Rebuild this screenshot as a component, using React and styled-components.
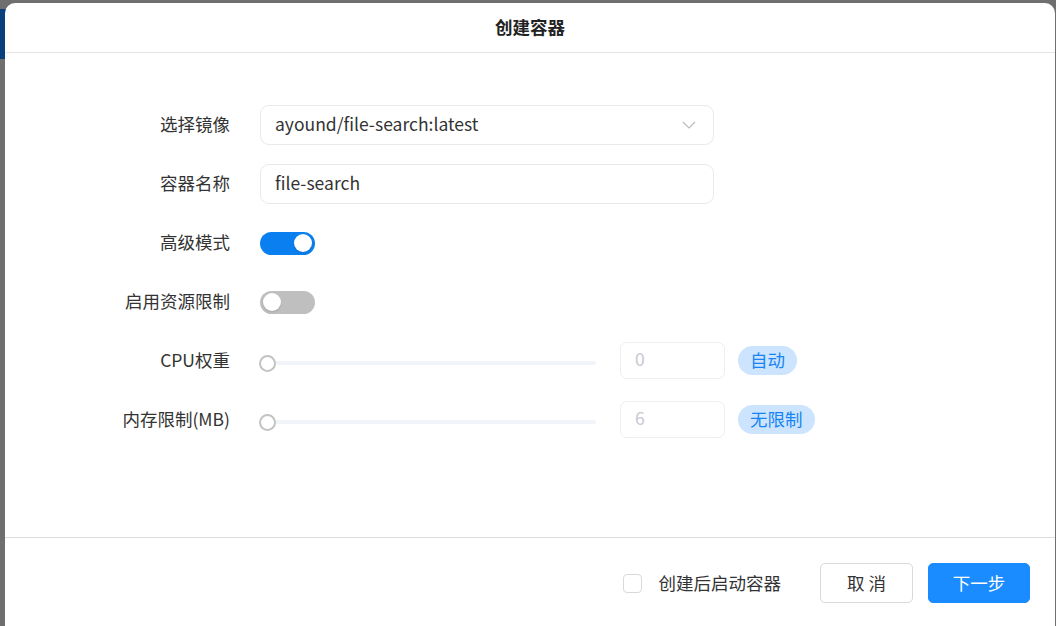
import React from "react";
import styled, { createGlobalStyle } from "styled-components";

const Global = createGlobalStyle`
  html, body { margin: 0; padding: 0; }
  body {
    width: 1056px; height: 626px; overflow: hidden;
    background: #6f6f6f;
    font-family: "Noto Sans CJK SC", "Noto Sans", sans-serif;
    color: #333;
  }
  * { box-sizing: border-box; }
`;

const Backdrop = styled.div`
  position: relative;
  width: 1056px;
  height: 626px;
  overflow: hidden;
  background: #6f6f6f;
`;

const PageStrip = styled.div`
  position: absolute;
  left: 0;
  top: 9px;
  width: 8px;
  height: 50px;
  background: #083f7c;
`;

const Dialog = styled.div`
  position: absolute;
  left: 5px;
  top: 3px;
  width: 1050px;
  height: 640px;
  background: #fff;
  border-radius: 10px;
  display: flex;
  flex-direction: column;
`;

const Header = styled.div`
  height: 50px;
  flex: none;
  display: flex;
  align-items: center;
  justify-content: center;
  border-bottom: 1px solid #e4e4e4;
  font-size: 17.5px;
  font-weight: 700;
  color: #222;
  padding-bottom: 3px;
`;

const Body = styled.div`
  height: 484px;
  flex: none;
  padding-top: 52px;
  display: flex;
  flex-direction: column;
  gap: 19px;
`;

const Row = styled.div`
  display: grid;
  grid-template-columns: 225px auto;
  column-gap: 30px;
  align-items: center;
  height: 40px;
`;

const Label = styled.div`
  text-align: right;
  font-size: 17.5px;
  line-height: 24px;
  padding-bottom: ${(p) => (p.$low ? "0" : "3px")};
  color: #333;
  white-space: nowrap;
`;

const Field = styled.div`
  position: relative;
  width: 454px;
  height: 40px;
  border: 1px solid #e9e9e9;
  border-radius: 9px;
  display: flex;
  align-items: center;
  padding: 0 15px 3px 14px;
  font-size: 17.5px;
  color: #333;
  justify-content: space-between;
`;

const Chevron = styled.svg`
  width: 14px;
  height: 10px;
  margin-right: 2px;
  margin-top: 3px;
`;

const Toggle = styled.div`
  position: relative;
  width: 55px;
  height: 23px;
  border-radius: 12px;
  background: ${(p) => (p.$on ? "#0a7ff0" : "#bfbfbf")};
`;

const Knob = styled.div`
  position: absolute;
  top: 2.5px;
  left: ${(p) => (p.$on ? "34px" : "2.5px")};
  width: 18px;
  height: 18px;
  border-radius: 50%;
  background: #fff;
  box-shadow: 0 1px 2px rgba(0,0,0,0.15);
`;

const Controls = styled.div`
  display: flex;
  align-items: center;
  margin-top: -2px;
`;

const Slider = styled.div`
  position: relative;
  width: 336px;
  height: 20px;
  margin-top: 6px;
  display: flex;
  align-items: center;
`;

const Track = styled.div`
  margin-left: 8px;
  flex: 1;
  height: 4px;
  border-radius: 2px;
  background: #f1f4f8;
`;

const Thumb = styled.div`
  position: absolute;
  left: -1px;
  top: 2px;
  width: 17px;
  height: 17px;
  border-radius: 50%;
  border: 2px solid #c3c3c3;
  background: #fff;
`;

const NumberBox = styled.div`
  margin-left: 24px;
  width: 105px;
  height: 37px;
  border: 1px solid #eeeeee;
  border-radius: 7px;
  display: flex;
  align-items: center;
  padding: 0 0 3px 14px;
  font-size: 17.5px;
  color: #c6c9d0;
`;

const Badge = styled.div`
  margin-left: 13px;
  height: 29px;
  padding: 0 12px 2px;
  border-radius: 15px;
  background: #cce4fd;
  color: #1684f4;
  font-size: 17.5px;
  display: flex;
  align-items: center;
`;

const Footer = styled.div`
  border-top: 1px solid #dcdcdc;
  padding: 25px 25px 0 0;
  display: flex;
  justify-content: flex-end;
  align-items: flex-start;
`;

const CheckWrap = styled.label`
  display: flex;
  align-items: center;
  height: 40px;
  font-size: 17.5px;
  color: #333;
  margin-right: 39px;
  padding-bottom: 2px;
`;

const Box = styled.span`
  width: 19px;
  height: 19px;
  border: 1px solid #d9d9d9;
  border-radius: 4px;
  margin-right: 17px;
  margin-top: 2px;
  background: #fff;
`;

const Button = styled.button`
  height: 40px;
  width: ${(p) => p.$w}px;
  margin-left: ${(p) => p.$ml || 0}px;
  border-radius: 5px;
  font-family: inherit;
  font-size: 17.5px;
  border: 1px solid ${(p) => (p.$primary ? "#1a8cff" : "#d9d9d9")};
  background: ${(p) => (p.$primary ? "#1a8cff" : "#fff")};
  color: ${(p) => (p.$primary ? "#fff" : "#333")};
  padding: 0 0 2px;
`;

export default function App() {
  return (
    <>
      <Global />
      <Backdrop>
        <PageStrip />
        <Dialog>
          <Header>创建容器</Header>
          <Body>
            <Row>
              <Label>选择镜像</Label>
              <Field>
                <span>ayound/file-search:latest</span>
                <Chevron viewBox="0 0 14 10">
                  <path d="M1 2 L7 8 L13 2" fill="none" stroke="#bbb" strokeWidth="1.2" />
                </Chevron>
              </Field>
            </Row>
            <Row>
              <Label>容器名称</Label>
              <Field>
                <span>file-search</span>
              </Field>
            </Row>
            <Row>
              <Label>高级模式</Label>
              <Toggle $on>
                <Knob $on />
              </Toggle>
            </Row>
            <Row>
              <Label>启用资源限制</Label>
              <Toggle>
                <Knob />
              </Toggle>
            </Row>
            <Row>
              <Label>CPU权重</Label>
              <Controls>
                <Slider>
                  <Track />
                  <Thumb />
                </Slider>
                <NumberBox>0</NumberBox>
                <Badge>自动</Badge>
              </Controls>
            </Row>
            <Row>
              <Label>内存限制(MB)</Label>
              <Controls>
                <Slider>
                  <Track />
                  <Thumb />
                </Slider>
                <NumberBox>6</NumberBox>
                <Badge>无限制</Badge>
              </Controls>
            </Row>
          </Body>
          <Footer>
            <CheckWrap>
              <Box />
              创建后启动容器
            </CheckWrap>
            <Button $w={93}>取 消</Button>
            <Button $w={102} $ml={15} $primary>
              下一步
            </Button>
          </Footer>
        </Dialog>
      </Backdrop>
    </>
  );
}
